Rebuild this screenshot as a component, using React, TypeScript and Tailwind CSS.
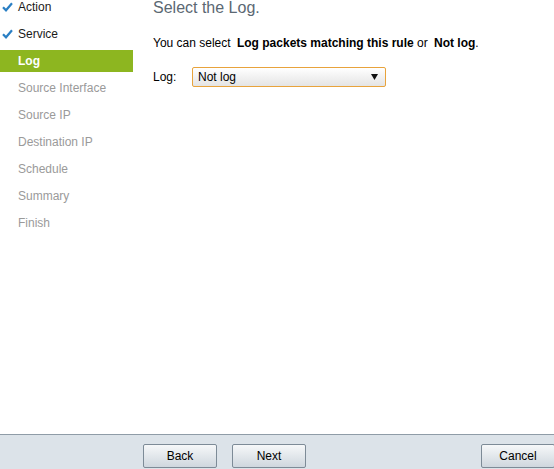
import React from "react";

const steps = [
  { label: "Action", state: "done" },
  { label: "Service", state: "done" },
  { label: "Log", state: "current" },
  { label: "Source Interface", state: "todo" },
  { label: "Source IP", state: "todo" },
  { label: "Destination IP", state: "todo" },
  { label: "Schedule", state: "todo" },
  { label: "Summary", state: "todo" },
  { label: "Finish", state: "todo" },
];

function Check() {
  return (
    <svg width="11" height="10" viewBox="0 0 11 10" className="absolute left-[2px] top-[6px]">
      <path d="M1 5.2 L4 8.3 L10 1.2" fill="none" stroke="#2a7fc4" strokeWidth="2.2" />
    </svg>
  );
}

function WizButton({ label, className = "" }: { label: string; className?: string }) {
  return (
    <button
      type="button"
      className={`h-[24px] w-[74px] rounded-[2px] border border-[#7d8b97] bg-gradient-to-b from-[#f6f8f9] to-[#cfd7de] text-[12px] text-black ${className}`}
    >
      {label}
    </button>
  );
}

export default function App() {
  return (
    <div className="flex h-[469px] w-[554px] flex-col overflow-hidden bg-white font-['Liberation_Sans',Arial,sans-serif] text-[12px]">
      <div className="flex flex-1">
        <ul className="-mt-1 flex w-[133px] flex-col gap-[5px]">
          {steps.map((s) => (
            <li
              key={s.label}
              className={`relative h-[22px] pl-[18px] leading-[22px] ${
                s.state === "current"
                  ? "bg-[#8db620] font-bold text-white"
                  : s.state === "done"
                  ? "text-[#1a1a1a]"
                  : "text-[#9a9a9a]"
              }`}
            >
              {s.state === "done" && <Check />}
              {s.label}
            </li>
          ))}
        </ul>
        <div className="flex-1 pl-[20px]">
          <h1 className="text-[16px] leading-[16px] text-[#5b6873]">Select the Log.</h1>
          <p className="mt-[20px] leading-[14px] text-black">
            You can select <b className="ml-[3px]">Log packets matching this rule</b> or{" "}
            <b className="ml-[3px]">Not log</b>.
          </p>
          <div className="mt-[17px] flex items-center">
            <span className="w-[39px] text-black">Log:</span>
            <div className="flex h-[20px] w-[194px] items-center justify-between rounded-[2px] border border-[#e8a33c] bg-gradient-to-b from-white to-[#e4e4e4] pl-[5px] pr-[7px] text-black">
              <span>Not log</span>
              <svg width="7" height="6" viewBox="0 0 7 6">
                <path d="M0 0 H7 L3.5 6 Z" fill="#111" />
              </svg>
            </div>
          </div>
        </div>
      </div>
      <div className="flex h-[35px] items-start border-t border-[#8f9ca7] bg-[#dce3e9] pl-[143px] pt-[9px]">
        <WizButton label="Back" />
        <WizButton label="Next" className="ml-[15px]" />
        <WizButton label="Cancel" className="ml-auto mr-[-1px]" />
      </div>
    </div>
  );
}
